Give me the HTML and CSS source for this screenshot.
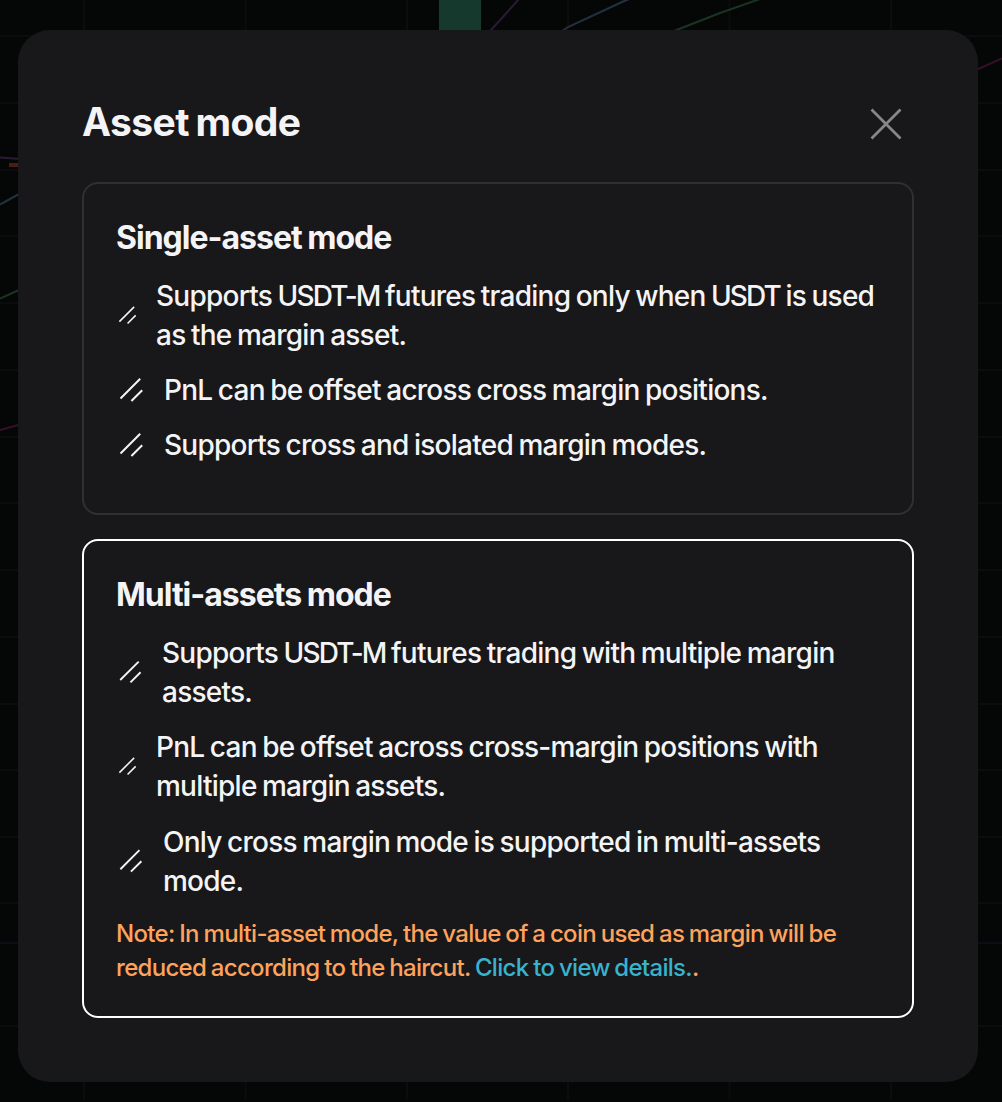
FILE: index.html
```html
<!DOCTYPE html>
<html lang="en">
<head>
<meta charset="utf-8">
<title>Asset mode</title>
<link rel="stylesheet" href="styles.css">
</head>
<body>
<svg class="chart" width="1002" height="1102" viewBox="0 0 1002 1102" fill="none" aria-hidden="true">
  <path class="grid" d="M84 0V1100M245.500 0V1100M407 0V1100M568 0V1100M729.500 0V1100M891 0V1100"/>
  <path class="grid" d="M0 36H1002M0 103H1002M0 170H1002M0 236H1002M0 303H1002M0 370H1002M0 437H1002M0 503H1002M0 570H1002M0 637H1002M0 704H1002M0 770H1002M0 837H1002M0 903H1002M0 1026H1002"/>
  <path class="pane-edge" d="M0 943H1002"/>
  <path fill="#15392c" d="M439 0h42v40h-42z"/>
  <path fill="#4b1d17" d="M9 163h20v4H9z"/>
  <g stroke-width="2">
    <path stroke="#2b1a36" d="M0 157.500L20 159M490 31L502 18L519 -1"/>
    <path stroke="#223040" d="M0 204.500L20 193.500M562 31L568 27L622 2L632 -2"/>
    <path stroke="#1b3420" d="M0 298.500L20 289.500M674 31L720 13L760 -1"/>
    <path stroke="#351129" d="M0 430L20 424.500M976 70L1002 58.500"/>
  </g>
</svg>
<svg class="defs" width="0" height="0" aria-hidden="true">
  <symbol id="slashes" viewBox="0 0 32 32"><path d="M4.500 23.500L24.200 3.800M15.400 26L26.200 15.200"/></symbol>
</svg>
<main class="modal">
  <header class="modal-header">
    <h1>Asset mode</h1>
    <svg class="close" viewBox="0 0 32 32"><path d="M1.500 1.500L30.500 30.500M30.500 1.500L1.500 30.500"/></svg>
  </header>
  <section class="card">
    <h2>Single-asset mode</h2>
    <ul>
      <li><svg class="mark small"><use href="#slashes"/></svg><p>Supports <span class="ticker">USDT-M</span> futures trading only when <span class="ticker">USDT</span> is used<br>as the margin asset.</p></li>
      <li><svg class="mark"><use href="#slashes"/></svg><p>PnL can be offset across cross margin positions.</p></li>
      <li><svg class="mark"><use href="#slashes"/></svg><p>Supports cross and isolated margin modes.</p></li>
    </ul>
  </section>
  <section class="card selected">
    <h2>Multi-assets mode</h2>
    <ul>
      <li><svg class="mark medium"><use href="#slashes"/></svg><p>Supports <span class="ticker">USDT-M</span> futures trading with multiple margin<br>assets.</p></li>
      <li><svg class="mark small"><use href="#slashes"/></svg><p>PnL can be offset across cross-margin positions with<br>multiple margin assets.</p></li>
      <li><svg class="mark large"><use href="#slashes"/></svg><p>Only cross margin mode is supported in multi-assets<br>mode.</p></li>
    </ul>
    <p class="note">Note: In multi-asset mode, the value of a coin used as margin will be<br>reduced according to the haircut. <a>Click to view details.</a>.</p>
  </section>
</main>
</body>
</html>
```
FILE: styles.css
```css
* { box-sizing: border-box; margin: 0; padding: 0; }
body {
  width: 1002px;
  height: 1102px;
  overflow: hidden;
  background: #050706;
  color: #f4f4f6;
  font-family: Inter, "Liberation Sans", sans-serif;
  padding: 30px 24px 0 18px;
}
.chart { position: absolute; left: 0; top: 0; z-index: -1; }
.defs { position: absolute; }
.grid { stroke: #0b0d0d; stroke-width: 2; }
.pane-edge { stroke: #0b0d13; stroke-width: 2; }
.modal {
  width: 960px;
  height: 1052px;
  padding: 64px;
  border-radius: 32px;
  background: #18181a;
}
.modal-header {
  display: flex;
  justify-content: space-between;
  align-items: center;
  height: 56px;
  margin-bottom: 32px;
  padding-right: 12px;
}
h1 { font-size: 39px; line-height: 56px; font-weight: 700; letter-spacing: -0.6px; word-spacing: -2px; }
.close { width: 32px; height: 32px; margin-top: 4px; fill: none; stroke: #87878a; stroke-width: 2.8; }
.card {
  border: 2px solid #303032;
  border-radius: 16px;
  padding: 32px 32px 0;
  height: 333px;
  white-space: nowrap;
}
.card + .card { margin-top: 24px; }
.selected { border-color: #fff; height: 479px; }
h2 { font-size: 32px; line-height: 44.8px; font-weight: 700; letter-spacing: -1px; word-spacing: -1px; margin-bottom: 16px; }
ul { list-style: none; }
li { display: flex; align-items: center; gap: 16px; margin-bottom: 16px; }
li p { font-size: 28px; line-height: 39.2px; font-weight: 450; letter-spacing: -0.75px; word-spacing: -1.3px; }
.ticker { letter-spacing: -1.85px; }
.mark { flex: none; width: 32px; height: 32px; fill: none; stroke: #f4f4f6; stroke-width: 2; }
.small { width: 24px; }
.medium { width: 30px; }
.large { width: 31px; }
.note { font-size: 24px; line-height: 33.6px; font-weight: 450; letter-spacing: -0.69px; word-spacing: -1px; color: #ffa35c; }
.note a { color: #38b2cd; }
```
